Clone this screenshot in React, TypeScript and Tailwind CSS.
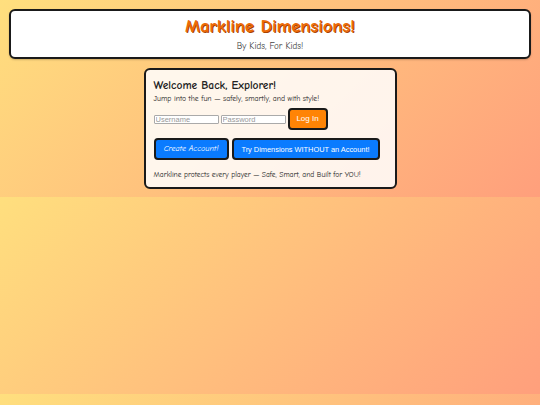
const comic = "font-['Comic_Sans_MS','Comic_Neue','DejaVu_Sans',sans-serif]";

const LoginRow = () => (
  <div className="flex items-center gap-[2px] mt-[6px]">
    <input
      type="text"
      placeholder="Username"
      className="w-[65px] h-[9px] border border-[#aaa] rounded-[1px] bg-white px-[1px] text-[7.5px] leading-none font-['Liberation_Sans',Arial,sans-serif] placeholder:text-[#999] outline-none"
    />
    <input
      type="password"
      placeholder="Password"
      className="w-[65px] h-[9px] border border-[#aaa] rounded-[1px] bg-white px-[1px] text-[7.5px] leading-none font-['Liberation_Sans',Arial,sans-serif] placeholder:text-[#999] outline-none"
    />
    <button className="w-[40px] h-[22px] bg-[#ff8405] border-2 border-[#1a1a1a] rounded-[4px] text-white text-[8px] font-['Liberation_Sans',Arial,sans-serif]">
      Log In
    </button>
  </div>
);

export default function App() {
  return (
    <div className="min-h-[405px] bg-[linear-gradient(135deg,#ffdf7e,#ff9f7c)] bg-[length:100%_197px] bg-repeat p-[9px] flex flex-col items-center gap-[9px]">
      <header className="w-full h-[50px] bg-white border-2 border-[#1a1a1a] rounded-[6px] flex flex-col items-center justify-center shadow-[0_1px_2px_rgba(0,0,0,0.2)]">
        <h1 className={`${comic} text-[18.5px] leading-none font-bold text-[#ec6a06] [text-shadow:1px_1px_0_#a84300]`}>
          Markline Dimensions!
        </h1>
        <p className={`${comic} text-[9px] leading-none text-[#444] mt-[6px]`}>By Kids, For Kids!</p>
      </header>

      <main className={`${comic} w-[253px] bg-white/85 border-2 border-[#1a1a1a] rounded-[6px] px-[8px] pt-[10px] pb-[8px] text-[#222]`}>
        <h2 className="text-[11.5px] font-bold leading-none">Welcome Back, Explorer!</h2>
        <p className="text-[7.7px] leading-none mt-[3px]">Jump into the fun — safely, smartly, and with style!</p>

        <LoginRow />

        <div className="flex gap-[3px] mt-[8px]">
          <button className={`${comic} w-[75px] h-[22px] bg-[#0a7bff] border-2 border-[#1a1a1a] rounded-[4px] text-white text-[8px] italic`}>
            Create Account!
          </button>
          <button className="w-[148px] h-[22px] bg-[#0a7bff] border-2 border-[#1a1a1a] rounded-[4px] text-white text-[7.4px] font-['Liberation_Sans',Arial,sans-serif]">
            Try Dimensions WITHOUT an Account!
          </button>
        </div>

        <p className="text-[7.5px] leading-none mt-[11px]">
          Markline protects every player — Safe, Smart, and Built for YOU!
        </p>
      </main>
    </div>
  );
}
